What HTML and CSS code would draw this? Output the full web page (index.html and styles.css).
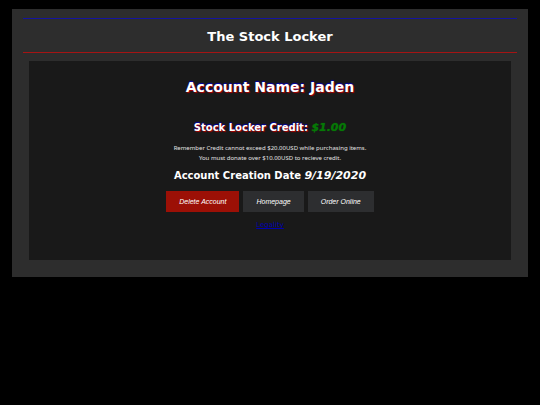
FILE: index.html
```html
<!DOCTYPE html>
<html lang="en">
<head>
    <meta charset="UTF-8">
    <title>The Stock Locker</title>
    <link rel="stylesheet" href="styles.css">
</head>
<body>
    <div class="container">
        <header class="header">
            <h1>The Stock Locker</h1>
        </header>

        <main class="account">
            <h1 class="glow">Account Name: Jaden</h1>
            <h2 class="glow">Stock Locker Credit: <i class="credit">$1.00</i></h2>
            <p>Remember Credit cannot exceed $20.00USD while purchasing items.</p>
            <p>You must donate over $10.00USD to recieve credit.</p>
            <h2 class="created">Account Creation Date <i>9/19/2020</i></h2>

            <div class="buttons">
                <button type="button" class="delete">Delete Account</button>
                <button type="button">Homepage</button>
                <button type="button">Order Online</button>
            </div>

            <a class="legal" href="#">Legality</a>
        </main>
    </div>
</body>
</html>
```

FILE: styles.css
```css
body {
    background: #000;
    color: #fff;
    font-family: Verdana, 'DejaVu Sans', sans-serif;
    font-size: 6px;
    line-height: 10px;
    margin: 9px 12px;
    text-align: center;
}

.container {
    background: #2d2d2d;
    padding: 9px 11px 17px;
}

.header {
    border-top: 1px solid #1414a0;
    border-bottom: 1px solid #a51414;
    padding: 10px 0 7px;
}

h1 {
    font-size: 13px;
    line-height: 16px;
    margin: 0;
}

h2 {
    font-size: 10px;
    line-height: 14px;
    margin: 0;
}

.account {
    background: #191919;
    margin: 8px 6px 0;
    padding: 18px 0 30px;
}

.glow {
    text-shadow: 1px 1px 1px #b00000, 0 -1px 1px #0000b0;
    margin-bottom: 26px;
}

.account h1 {
    font-size: 14px;
}

h2.glow {
    margin-bottom: 8px;
}

i {
    font-size: 11px;
}

.credit {
    color: #067806;
    text-shadow: 0 0 1px #067806;
}

p {
    color: #e4e4e4;
    font-family: 'Noto Sans', sans-serif;
    margin: 0;
}

.account .created {
    margin: 6px 0 8px;
}

.buttons {
    display: flex;
    justify-content: center;
    gap: 4px;
    margin-bottom: 8px;
}

button {
    background: #2d2e30;
    border: none;
    color: #fff;
    cursor: pointer;
    font-family: Arial, 'Liberation Sans', sans-serif;
    font-size: 7px;
    font-style: italic;
    line-height: 9px;
    padding: 6px 13px;
}

.delete {
    background: #9c1006;
}

.legal {
    color: #0000b0;
    font-size: 7px;
}
```
